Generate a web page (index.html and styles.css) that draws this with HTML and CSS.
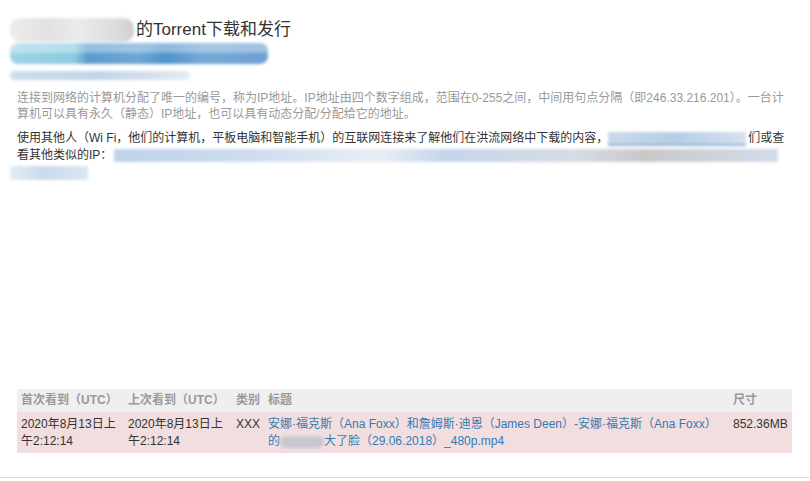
FILE: index.html
```html
<!DOCTYPE html>
<html lang="zh-CN">
<head>
    <meta charset="UTF-8">
    <title>IP Torrent</title>
    <link rel="stylesheet" href="styles.css">
</head>
<body>
    <div class="page">
        <div class="head">
            <h1><span class="mask mask-grey"></span>的Torrent下载和发行</h1>
            <div class="mask mask-blue"></div>
            <div class="mask mask-line"></div>
        </div>

        <p class="note">连接到网络的计算机分配了唯一的编号，称为IP地址。IP地址由四个数字组成，范围在0-255之间，中间用句点分隔（即246.33.216.201）。一台计算机可以具有永久（静态）IP地址，也可以具有动态分配/分配给它的地址。</p>

        <p class="info">使用其他人（Wi Fi，他们的计算机，平板电脑和智能手机）的互联网连接来了解他们在洪流网络中下载的内容，<span class="mask mask-link"></span>们或查看其他类似的IP：<span class="mask mask-ips"></span><br><span class="mask mask-tail"></span></p>

        <table class="torrents">
            <colgroup>
                <col style="width:107px">
                <col style="width:108px">
                <col style="width:32px">
                <col>
                <col style="width:63px">
            </colgroup>
            <thead>
                <tr>
                    <th>首次看到（UTC）</th>
                    <th>上次看到（UTC）</th>
                    <th>类别</th>
                    <th>标题</th>
                    <th>尺寸</th>
                </tr>
            </thead>
            <tbody>
                <tr class="danger">
                    <td>2020年8月13日上午2:12:14</td>
                    <td>2020年8月13日上午2:12:14</td>
                    <td>XXX</td>
                    <td><a href="#">安娜·福克斯（Ana Foxx）和詹姆斯·迪恩（James Deen）-安娜·福克斯（Ana Foxx）的<span class="mask mask-word"></span>大了脸（29.06.2018）_480p.mp4</a></td>
                    <td>852.36MB</td>
                </tr>
            </tbody>
        </table>
    </div>
    <div class="footer-line"></div>
</body>
</html>
```

FILE: styles.css
```css
body {
    margin: 0;
    font-family: "Liberation Sans", "Noto Sans CJK SC", sans-serif;
    font-size: 12px;
    color: #333;
    background: #fff;
}

.page {
    padding: 0 18px 0 17px;
    height: 477px;
    box-sizing: border-box;
}

.head {
    padding-top: 17px;
    margin-left: -7px;
}

h1 {
    margin: 0;
    font-size: 17px;
    font-weight: normal;
    line-height: 26px;
    color: #333;
    display: flex;
    align-items: center;
}

/* blurred-out parts of the screenshot */
.mask {
    display: inline-block;
    filter: blur(1.5px);
    vertical-align: middle;
}

.mask-grey {
    width: 124px;
    height: 24px;
    border-radius: 10px;
    background: linear-gradient(90deg, #ececec 0, #e2e2e2 30%, #ebebeb 55%, #dcdcdc 85%, #cfcfcf 100%);
    margin-right: 2px;
}

.mask-blue {
    display: block;
    width: 258px;
    height: 21px;
    border-radius: 8px;
    background:
        linear-gradient(180deg, rgba(255,255,255,0.35) 0, rgba(255,255,255,0.35) 45%, rgba(255,255,255,0) 46%),
        linear-gradient(90deg, #9fd3e6 0, #8ccbe0 25%, #5a9ccc 30%, #6fa6d4 50%, #4f93c8 60%, #76a9d6 75%, #6e9fd0 100%);
}

.mask-line {
    display: block;
    width: 180px;
    height: 9px;
    margin-top: 7px;
    border-radius: 5px;
    background: linear-gradient(90deg, #cddcec 0, #c3d4e8 50%, #e4ebf3 100%);
}

.note {
    margin: 10px 0 0;
    line-height: 16px;
    color: #999;
}

.info {
    margin: 8px 0 0;
    line-height: 17px;
    color: #333;
}

.mask-link {
    width: 138px;
    height: 12px;
    margin-right: 2px;
    background: linear-gradient(90deg, #c9daea 0, #b7cde4 50%, #d5e2ef 100%);
    border-bottom: 2px solid #8fb0d4;
}

.mask-ips {
    width: 664px;
    height: 13px;
    margin-left: 2px;
    background: linear-gradient(90deg, #bfd2e8 0, #cddcee 20%, #e8eef5 40%, #c4d5ea 50%, #d6dce4 70%, #c8c8c8 80%, #d3dceb 100%);
}

.mask-tail {
    width: 78px;
    height: 14px;
    margin-left: -7px;
    background: linear-gradient(90deg, #e3eef6 0, #c9dbeb 40%, #d9e6f1 100%);
}

.torrents {
    width: 100%;
    margin-top: 208px;
    border-collapse: collapse;
    table-layout: fixed;
}

.torrents th,
.torrents td {
    padding: 4px 4px 3px;
    text-align: left;
    vertical-align: top;
    line-height: 17px;
}

.torrents th {
    background-color: #efefef;
    color: #999;
    font-weight: bold;
    padding: 3px 4px;
}

.torrents tr.danger td {
    background-color: #f2dede;
}

.torrents a {
    color: #337ab7;
    text-decoration: none;
}

.mask-word {
    width: 44px;
    height: 12px;
    border-radius: 6px;
    background: #c8c8d0;
}

.footer-line {
    border-top: 1px solid #ddd;
    height: 3px;
}
```
